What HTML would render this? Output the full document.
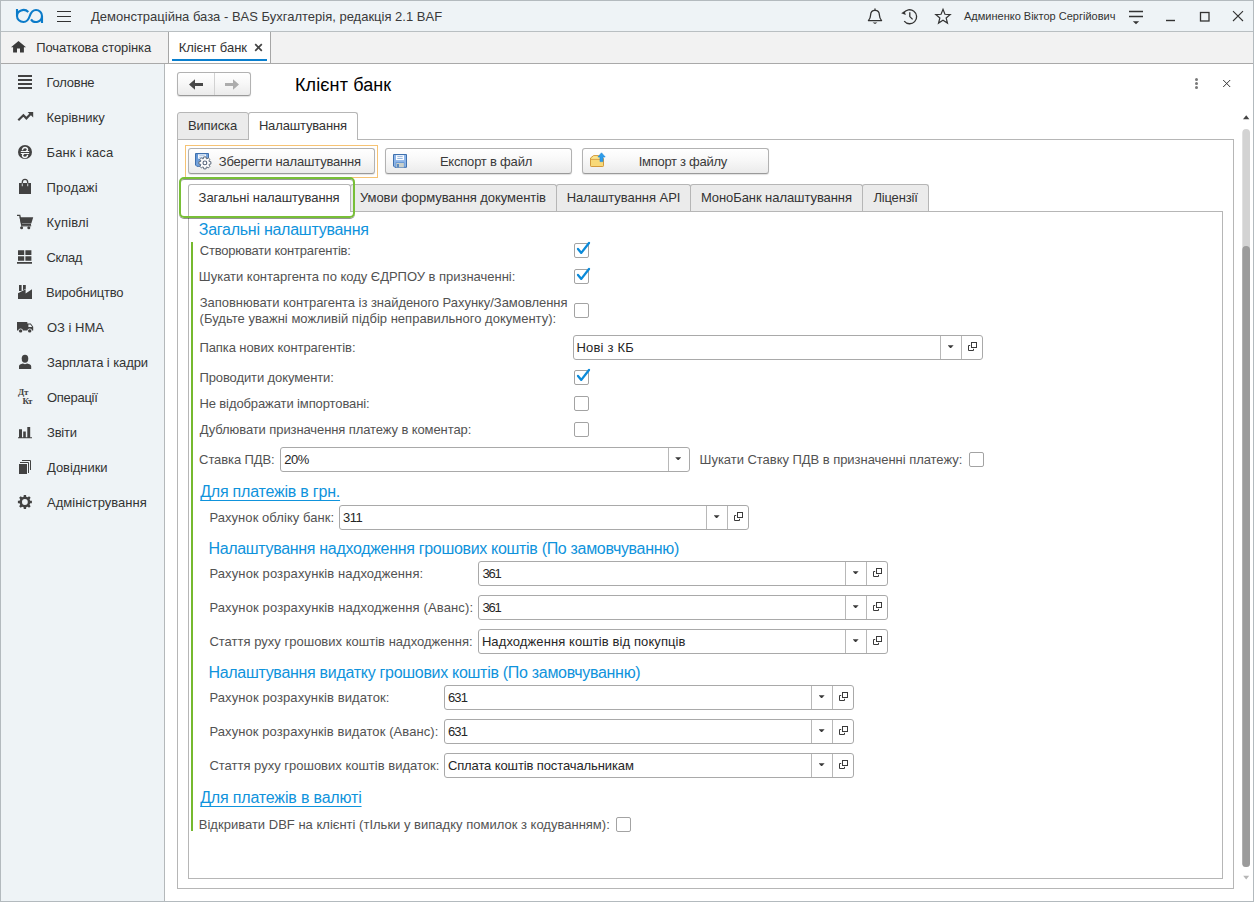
<!DOCTYPE html>
<html lang="uk"><head>
<meta charset="utf-8">
<title>Клієнт банк</title>
<style>
*{box-sizing:border-box;margin:0;padding:0}
html,body{width:1254px;height:902px;overflow:hidden;background:#fff}
body{font-family:"Liberation Sans",sans-serif;font-size:13px;color:#3c3c3c;position:relative}
.abs{position:absolute}
#win{position:absolute;left:0;top:0;width:1254px;height:902px;border:1px solid #b3babe;overflow:hidden}
#topbar{position:absolute;left:1px;top:1px;width:1252px;height:30px;background:#eef3f6}
#topline{position:absolute;left:1px;top:31px;width:1252px;height:1px;background:#b9bfc2}
#tabbar{position:absolute;left:1px;top:32px;width:1252px;height:31px;background:#f2f2f2}
#tabline{position:absolute;left:1px;top:63px;width:1252px;height:1px;background:#a9a9a9}
#sidebar{position:absolute;left:1px;top:64px;width:163px;height:837px;background:#eef3f6}
#sideline{position:absolute;left:164px;top:64px;width:1px;height:837px;background:#b4b8ba}
.t{position:absolute;white-space:nowrap;line-height:16px}
.nav{position:absolute;left:47px;white-space:nowrap;line-height:16px;color:#333}
.lbl{position:absolute;white-space:nowrap;line-height:16px;color:#525252}
.h{position:absolute;white-space:nowrap;line-height:20px;font-size:16px;color:#0f93dc;letter-spacing:-0.3px}
.lnk{text-decoration:underline;text-underline-offset:3px;text-decoration-thickness:1px;text-decoration-skip-ink:none}
.inp{position:absolute;height:25px;border:1px solid #a9a9a9;border-radius:3px;background:#fff}
.inp .v{position:absolute;left:3px;top:4px;line-height:16px;color:#262626;white-space:nowrap}
.inp .dd{position:absolute;top:0;width:1px;height:23px;background:#b8b8b8}
.inp .tri{position:absolute;top:9.300px;width:6px;height:3.200px;background:#3a3a3a;clip-path:polygon(0 0,100% 0,50% 100%)}
.cb{position:absolute;width:15px;height:15px;border:1px solid #a3a3a3;border-radius:2px;background:#fff}
.btn{position:absolute;height:26px;border:1px solid #b2b2b2;border-bottom-color:#9a9a9a;border-radius:3px;background:linear-gradient(#ffffff,#f8f8f8 45%,#ebebeb);box-shadow:0 1px 1px rgba(0,0,0,.12)}
.tab{position:absolute;border:1px solid #b6b6b6;border-bottom:none;background:#ebebeb;border-radius:3px 3px 0 0}
.tab.on{background:#fff}
</style>
</head>
<body>
<div id="win"></div>
<div id="topbar"></div>
<div id="topline"></div>
<div id="tabbar"></div>
<div id="tabline"></div>
<div id="sidebar"></div>
<div id="sideline"></div>

<!-- TOPBAR -->
<div id="top-content">
<svg class="abs" style="left:0;top:0" width="90" height="32" viewBox="0 0 90 32" fill="none">
 <g stroke="#0b7bc9" stroke-width="2.1" fill="none" stroke-linecap="butt">
  <path d="M17 9V16A6.5 6 0 0 0 23.5 22C27 22 28.7 19.2 29.75 16S32.5 10 36 10A6 6 0 0 1 42 16V23"></path>
  <path d="M17 16A6.5 6 0 0 1 28.3 11.95"></path>
  <path d="M42 16A6 6 0 0 1 31 19.3"></path>
 </g>
 <g stroke="#333" stroke-width="1.15">
  <path d="M57 11.5H71M57 16.5H71M57 21.5H71"></path>
 </g>
</svg>
<div class="t" style="left:91px;top:9px;color:#3a3a3a">Демонстраційна база - BAS Бухгалтерія, редакція 2.1 BAF</div>
<svg class="abs" style="left:860px;top:0" width="394" height="32" viewBox="860 0 394 32" fill="none" stroke="#333" stroke-width="1.3">
 <!-- bell -->
 <path d="M868.4 20.600H881.600C880 19 879.500 17.500 879.400 15C879.300 11.600 877.500 10.300 875 10.300C872.500 10.300 870.700 11.600 870.600 15C870.500 17.500 870 19 868.400 20.600Z" stroke-linejoin="round"></path>
 <path d="M875 9.9V8.9" stroke-linecap="round"></path>
 <path d="M872.6 22.4H877.4L875 24Z" fill="#333" stroke="none"></path>
 <!-- history -->
 <path d="M903.6 13.2A7 7 0 1 1 904.2 21.2"></path>
 <path d="M901.2 13.2L905.8 14.9L904.6 11Z" fill="#333" stroke="none"></path>
 <path d="M909.8 12.3V16.6L912.6 19.4"></path>
 <!-- star -->
 <path d="M943.00 9.30L944.94 14.23L950.23 14.55L946.14 17.92L947.47 23.05L943.00 20.20L938.53 23.05L939.86 17.92L935.77 14.55L941.06 14.23Z" stroke-linejoin="miter" stroke-width="1.2"></path>
 <!-- menu -->
 <path d="M1129 11.5H1143M1129 16.5H1143" stroke-width="1.4"></path>
 <path d="M1132.8 21.2H1139.2L1136 24.2Z" fill="#333" stroke="none"></path>
 <!-- min max close -->
 <path d="M1166 20.5H1175" stroke-width="1.4"></path>
 <rect x="1200.5" y="12.5" width="8.5" height="8.5" stroke-width="1.3"></rect>
 <path d="M1233 11.2L1243 21M1243 11.200L1233 21" stroke-width="1.1"></path>
</svg>
<div class="t" style="left:964px;top:8px;font-size:11px;color:#333">Админенко Віктор Сергійович</div>
</div>
<!-- TABBAR -->
<div id="tabs-content">
<svg class="abs" style="left:11px;top:41px" width="15" height="12" viewBox="0 0 15 12"><path d="M7.5 0L0 6.2H2.1V11.5H6V7.6H9V11.5H12.9V6.2H15Z" fill="#3b3b3b"></path></svg>
<div class="t" style="left: 36.3px; top: 40px; color: rgb(51, 51, 51); letter-spacing: -0.105px;">Початкова сторінка</div>
<div class="abs" style="left:168px;top:32px;width:103px;height:31px;background:#fff;border-left:1px solid #a6a6a6;border-right:1px solid #a6a6a6"></div>
<div class="abs" style="left:172px;top:59px;width:95px;height:2px;background:#0a7fce"></div>
<div class="t" style="left: 178.7px; top: 40px; color: rgb(51, 51, 51); letter-spacing: -0.04px;">Клієнт банк</div>
<svg class="abs" style="left:254px;top:43px" width="9" height="9" viewBox="0 0 9 9"><path d="M1.200 1.200L7.800 7.800M7.800 1.200L1.200 7.800" stroke="#444" stroke-width="1.700" fill="none"></path></svg>
</div>
<!-- SIDEBAR -->
<div id="side-content">
<div class="nav" style="top: 75px; left: 46.6px; letter-spacing: -0.233px;">Головне</div>
<div class="nav" style="top: 110px; left: 46.6px; letter-spacing: -0.05px;">Керівнику</div>
<div class="nav" style="top: 145px; left: 46.6px; letter-spacing: 0.09px;">Банк і каса</div>
<div class="nav" style="top: 180px; left: 46.6px; letter-spacing: 0.184px;">Продажі</div>
<div class="nav" style="top: 215px; left: 46.6px; letter-spacing: 0.15px;">Купівлі</div>
<div class="nav" style="top: 250px; left: 46.6px; letter-spacing: -0.475px;">Склад</div>
<div class="nav" style="top: 285px; left: 46px; letter-spacing: -0.21px;">Виробництво</div>
<div class="nav" style="top: 320px; left: 47px; letter-spacing: -0.014px;">ОЗ і НМА</div>
<div class="nav" style="top: 355px; left: 47px; letter-spacing: -0.08px;">Зарплата і кадри</div>
<div class="nav" style="top: 390px; left: 47px; letter-spacing: -0.286px;">Операції</div>
<div class="nav" style="top: 425px; left: 47px; letter-spacing: -0.2px;">Звіти</div>
<div class="nav" style="top: 460px; left: 47px; letter-spacing: -0.05px;">Довідники</div>
<div class="nav" style="top: 495px; left: 47px; letter-spacing: 0.015px;">Адміністрування</div>
<svg class="abs" style="left:0;top:64px" width="50" height="460" viewBox="0 64 50 460" fill="#424242">
 <!-- Головне -->
 <path d="M18 75h14v2h-14zM18 79h14v2h-14zM18 83h14v2h-14zM18 87h14v2h-14z"></path>
 <!-- Керівнику -->
 <path d="M18.3 120.3L23.4 115.2L26.4 118.3L31 113.6" fill="none" stroke="#424242" stroke-width="2.2"></path>
 <path d="M27.6 112H33.2V117.6Z"></path>
 <!-- Банк і каса -->
 <circle cx="25" cy="152" r="7"></circle>
 <g fill="none" stroke="#f4f8fa" stroke-width="1.300">
  <path d="M22.500 150.200C22.200 146.900 27.800 146.600 27.500 149.800C27.400 150.700 26.600 151.200 26 151.500M27.500 154.800C27.800 158.100 22.200 158.400 22.500 155.200C22.600 154.300 23.400 153.800 24 153.500" stroke-width="1.500"></path>
  <path d="M20.800 151.500H29.200M20.800 153.500H29.200" stroke-width="1"></path>
 </g>
 <!-- Продажі -->
 <path d="M19 183H31V194H19Z"></path>
 <path d="M22.3 186V182.2A2.7 2.9 0 0 1 27.7 182.2V186" fill="none" stroke="#424242" stroke-width="1.3"></path>
 <path d="M22.3 186.3V183.400M27.7 186.3V183.4" fill="none" stroke="#c9ced1" stroke-width="1.1"></path>
 <!-- Купівлі -->
 <path d="M17 215.400H19.800L21.6 224.5H31" fill="none" stroke="#424242" stroke-width="1.3"></path>
 <path d="M19.600 217.300H33.200L31.300 223.600H21Z"></path>
 <path d="M21 225.200H31.200V226.400H21Z"></path>
 <circle cx="21.600" cy="227.800" r="1.500"></circle><circle cx="28.800" cy="227.800" r="1.500"></circle>
 <!-- Склад -->
 <path d="M18 250.200H24.200V255H18ZM25.400 250.200H31.400V255H25.400ZM18 256.200H24.200V260.800H18ZM25.400 256.200H31.400V260.800H25.400ZM17 262H32V263.700H17Z"></path>
 <!-- Виробництво -->
 <path d="M18 299V293.300L25.600 289.300V293.600L32 289.300V299Z"></path>
 <path d="M19 285H21.600V291H19ZM23 285H25.800V288.800L23 290.200Z"></path>
 <!-- ОЗ і НМА -->
 <path d="M17 322H27.300V323.600H30.800L33.200 326.700V330.400H17Z"></path>
 <path d="M28.400 324.600H30.400L32.200 327.100H28.400Z" fill="#eef3f6"></path>
 <circle cx="20.600" cy="330.800" r="2.300" fill="#eef3f6"></circle><circle cx="29.700" cy="330.800" r="2.300" fill="#eef3f6"></circle>
 <circle cx="20.600" cy="330.900" r="1.700"></circle><circle cx="29.700" cy="330.900" r="1.700"></circle>
 <!-- Зарплата і кадри -->
 <ellipse cx="25" cy="358.800" rx="3.300" ry="4"></ellipse>
 <path d="M19 369V366.200C19 364.600 20.600 364 22.800 363.400L25 364.200L27.200 363.400C29.400 364 31.200 364.600 31.200 366.200V369Z"></path>
 <!-- Звіти -->
 <path d="M19 429.200H22V437.200H19ZM23.200 431.400H25.800V437.200H23.200ZM27.300 427H30.200V437.200H27.300ZM18 437.200H32V438.200H18Z"></path>
 <!-- Довідники -->
 <path d="M19 464H27V474H19Z"></path>
 <path d="M20 462.500H28.500V473M22 460.500H30.500V470" fill="none" stroke="#424242" stroke-width="1"></path>
 <!-- Адміністрування -->
 <path d="M23.62 496.65L23.73 495.00L26.07 495.00L26.18 496.65L27.77 497.31L29.03 496.22L30.68 497.87L29.59 499.13L30.25 500.72L31.90 500.83L31.90 503.17L30.25 503.28L29.59 504.87L30.68 506.13L29.03 507.78L27.77 506.69L26.18 507.35L26.07 509.00L23.73 509.00L23.62 507.35L22.03 506.69L20.77 507.78L19.12 506.13L20.21 504.87L19.55 503.28L17.90 503.17L17.90 500.83L19.55 500.72L20.21 499.13L19.12 497.87L20.77 496.22L22.03 497.31ZM24.900 499.100A2.900 2.900 0 1 0 24.900 504.900A2.900 2.900 0 1 0 24.900 499.100Z" fill-rule="evenodd"></path>
</svg>
<div class="abs" style="left:18px;top:388px;font-family:'Liberation Serif',serif;font-weight:bold;font-size:9px;line-height:9px;color:#424242;letter-spacing:-0.3px">Дт</div>
<div class="abs" style="left:22.500px;top:397px;font-family:'Liberation Serif',serif;font-weight:bold;font-size:9px;line-height:9px;color:#424242;letter-spacing:-0.700px">Кт</div>

</div>
<!-- MAIN -->
<div id="main-content">
<div class="btn" style="left:177px;top:72px;width:74px;height:24px"></div>
<div class="abs" style="left:214px;top:73px;width:1px;height:22px;background:#d2d2d2"></div>
<svg class="abs" style="left:186px;top:76px" width="58" height="16" viewBox="0 0 58 16"><path d="M3 8.500L9 3.200V7H17V10H9V13.800Z" fill="#484848"></path><path d="M53 8.500L47 3.200V7H39V10H47V13.800Z" fill="#adadad"></path></svg>
<div class="big t" style="left: 295px; top: 74px; font-size: 18px; line-height: 22px; color: rgb(0, 0, 0); letter-spacing: 0.11px;">Клієнт банк</div>
<svg class="abs" style="left:1190px;top:74px" width="46" height="20" viewBox="1190 74 46 20"><g fill="#787878"><circle cx="1196.500" cy="79.500" r="1.500"></circle><circle cx="1196.500" cy="83.500" r="1.500"></circle><circle cx="1196.500" cy="87.500" r="1.500"></circle></g><path d="M1223.200 80L1230.200 87M1230.200 80L1223.200 87" stroke="#333" stroke-width="1" fill="none"></path></svg>
<div class="abs" style="left:177px;top:139px;width:1057px;height:750px;border:1px solid #b6b6b6"></div>
<div class="tab" style="left:177px;top:112px;width:72px;height:28px;border-bottom:1px solid #b6b6b6"></div>
<div class="tab on" style="left:248px;top:112px;width:110px;height:28px"></div>
<div class="t" style="left: 187.9px; top: 118px; color: rgb(51, 51, 51); letter-spacing: -0.116px;">Виписка</div>
<div class="t" style="left: 258.9px; top: 118px; color: rgb(51, 51, 51); letter-spacing: -0.155px;">Налаштування</div>
<svg class="abs" style="left:1240px;top:112px" width="12" height="780" viewBox="1240 112 12 780"><path d="M1243 119.200H1249.400L1246.200 115.200Z" fill="#444"></path><rect x="1242.300" y="129" width="7.700" height="738" rx="3.850" fill="#d3d3d3"></rect><rect x="1242.300" y="246" width="7.700" height="621" rx="3.850" fill="#9b9b9b"></rect><path d="M1243.200 875.800H1249.200L1246.200 879.600Z" fill="#b6b6b6"></path></svg>
<div class="abs" style="left:185px;top:145px;width:193px;height:33px;border:1px solid #f6c374"></div>
<div class="btn" style="left:188px;top:148px;width:187px"></div>
<div class="btn" style="left:385px;top:148px;width:187px"></div>
<div class="btn" style="left:582px;top:148px;width:187px"></div>
<div class="t" style="left: 218.8px; top: 154px; color: rgb(58, 58, 58); letter-spacing: -0.185px;">Зберегти налаштування</div>
<div class="t" style="left: 439.9px; top: 154px; color: rgb(58, 58, 58); letter-spacing: -0.207px;">Експорт в файл</div>
<div class="t" style="left: 638.7px; top: 154px; color: rgb(58, 58, 58); letter-spacing: -0.276px;">Імпорт з файлу</div>
<svg class="abs" style="left:190px;top:150px" width="420" height="22" viewBox="190 150 420 22">
 <defs><linearGradient id="dg" x1="0" y1="0" x2="1" y2="1"><stop offset="0" stop-color="#5a8fd0"></stop><stop offset="1" stop-color="#8fb8ea"></stop></linearGradient></defs>
 <!-- save settings: diskette + gear -->
 <path d="M195.500 153.500H208.500V166.300H196.800L195.500 165Z" fill="url(#dg)" stroke="#3f70ad" stroke-width="1"></path>
 <rect x="198" y="154.300" width="8" height="4.400" fill="#f4f8fd"></rect>
 <path d="M199.300 155.700H204.700M199.300 157.500H204.700" stroke="#9db9dc" stroke-width=".8"></path>
 <path d="M203.51 158.62L203.71 156.92L206.09 156.92L206.29 158.62L206.94 158.89L208.29 157.83L209.97 159.51L208.91 160.86L209.18 161.51L210.88 161.71L210.88 164.09L209.18 164.29L208.91 164.94L209.97 166.29L208.29 167.97L206.94 166.91L206.29 167.18L206.09 168.88L203.71 168.88L203.51 167.18L202.86 166.91L201.51 167.97L199.83 166.29L200.89 164.94L200.62 164.29L198.92 164.09L198.92 161.71L200.62 161.51L200.89 160.86L199.83 159.51L201.51 157.83L202.86 158.89Z" fill="#fdfdfd" stroke="#5f6c7d" stroke-width="1" stroke-linejoin="round"></path>
 <circle cx="204.900" cy="162.900" r="1.900" fill="#fff" stroke="#55647a" stroke-width="1.100"></circle>
 <!-- export: diskette -->
 <path d="M393.500 154.500H406.500V167.300H394.800L393.500 166Z" fill="#8db5e8" stroke="#3f70ad" stroke-width="1"></path>
 <rect x="396" y="155.200" width="8" height="4.900" fill="#fbfdff"></rect>
 <path d="M397.300 156.600H402.700M397.300 158.500H402.700" stroke="#8eafd8" stroke-width=".9"></path>
 <rect x="395.600" y="162.300" width="8.800" height="5" fill="#5d8fce"></rect>
 <rect x="396.300" y="163" width="7.600" height="4.300" fill="#c9d0cb"></rect>
 <rect x="397.200" y="164" width="1.600" height="3.300" fill="#4279bd"></rect>
 <!-- import: folder + arrow -->
 <path d="M590.500 158V165.800Q590.500 166.500 591.200 166.500H602.800Q603.500 166.500 603.500 165.800V158.500L598.300 155.600H593.600Z" fill="#f8d978" stroke="#d39a3c" stroke-width="1" stroke-linejoin="round"></path>
 <path d="M590.800 159.400H603.200" stroke="#d9a54a" stroke-width="1"></path>
 <path d="M591.300 158.600L593.800 156.300H598L600.500 158.600Z" fill="#fbe48f"></path>
 <path d="M601.500 152.800L605.200 157H603V161.600H600V157H597.900Z" fill="#2e9ce9" stroke="#2389d6" stroke-width=".6" stroke-linejoin="round"></path>
</svg>
<div class="abs" style="left:188px;top:211px;width:1035px;height:668px;border:1px solid #b6b6b6"></div>
<div class="tab on" style="left:188px;top:184px;width:163px;height:28px"></div>
<div class="tab" style="left:350px;top:184px;width:207px;height:27px"></div>
<div class="tab" style="left:556px;top:184px;width:135px;height:27px"></div>
<div class="tab" style="left:690px;top:184px;width:173px;height:27px"></div>
<div class="tab" style="left:862px;top:184px;width:67px;height:27px"></div>
<div class="t" style="left: 198.6px; top: 190px; color: rgb(51, 51, 51); letter-spacing: -0.07px;">Загальні налаштування</div>
<div class="t" style="left: 359.9px; top: 190px; color: rgb(51, 51, 51); letter-spacing: -0.054px;">Умови формування документів</div>
<div class="t" style="left: 566.7px; top: 190px; color: rgb(51, 51, 51); letter-spacing: -0.046px;">Налаштування API</div>
<div class="t" style="left: 700.9px; top: 190px; color: rgb(51, 51, 51); letter-spacing: -0.07px;">МоноБанк налаштування</div>
<div class="t" style="left: 873.4px; top: 190px; color: rgb(51, 51, 51); letter-spacing: -0.171px;">Ліцензії</div>
<div class="abs" style="left:179px;top:177px;width:176px;height:41px;border:2px solid #78bf37;border-radius:5px;box-shadow:0 1px 0 rgba(0,0,0,.42),inset 0 1px 0 rgba(0,0,0,.42)"></div>
<div class="abs" style="left:191px;top:242px;width:2px;height:589px;background:#76b92f"></div>
<div class="h" style="left: 198.8px; top: 220px; letter-spacing: -0.26px;">Загальні налаштування</div>
<div class="lbl" style="left: 199.8px; top: 243px; letter-spacing: -0.2px;">Створювати контрагентів:</div>
<div class="cb" style="left:574px;top:243px"></div><svg class="abs" style="left:574px;top:240px" width="18" height="18" viewBox="0 0 18 18" fill="none"><path d="M4 9L7.300 12.900L15 3" stroke="#0b8ad9" stroke-width="2.300" stroke-linecap="round" stroke-linejoin="round"></path></svg>
<div class="lbl" style="left: 198.8px; top: 269px; letter-spacing: -0.019px;">Шукати контаргента по коду ЄДРПОУ в призначенні:</div>
<div class="cb" style="left:574px;top:269px"></div><svg class="abs" style="left:574px;top:266px" width="18" height="18" viewBox="0 0 18 18" fill="none"><path d="M4 9L7.300 12.900L15 3" stroke="#0b8ad9" stroke-width="2.300" stroke-linecap="round" stroke-linejoin="round"></path></svg>
<div class="lbl" style="left: 199.8px; top: 295px; letter-spacing: -0.045px;">Заповнювати контрагента із знайденого Рахунку/Замовлення</div>
<div class="lbl" style="left: 199.6px; top: 311px; letter-spacing: 0.021px;">(Будьте уважні можливій підбір неправильного документу):</div>
<div class="cb" style="left:574px;top:303px"></div>
<div class="lbl" style="left: 199.4px; top: 340px; letter-spacing: -0.079px;">Папка нових контрагентів:</div>
<div class="inp" style="left:573px;top:335px;width:410px"><span class="v" style="left: 2.5px; letter-spacing: 0.2px;">Нові з КБ</span><i class="dd" style="left:366px"></i><i class="tri" style="left:373.600px"></i><i class="dd" style="left:387px"></i><svg class="abs" style="left:393px;top:6px" width="11" height="11" viewBox="0 0 11 11" fill="none" stroke="#3a3a3a" stroke-width="1"><rect x="4.500" y="0.500" width="5" height="5"></rect><path d="M3.200 3.500H1.500V8.500H6.500V6.800"></path></svg></div>
<div class="lbl" style="left: 199.4px; top: 370px; letter-spacing: -0.1px;">Проводити документи:</div>
<div class="cb" style="left:574px;top:370px"></div><svg class="abs" style="left:574px;top:367px" width="18" height="18" viewBox="0 0 18 18" fill="none"><path d="M4 9L7.300 12.900L15 3" stroke="#0b8ad9" stroke-width="2.300" stroke-linecap="round" stroke-linejoin="round"></path></svg>
<div class="lbl" style="left: 199.4px; top: 396px; letter-spacing: -0.104px;">Не відображати імпортовані:</div>
<div class="cb" style="left:574px;top:396px"></div>
<div class="lbl" style="left: 199.8px; top: 422px; letter-spacing: -0.096px;">Дублювати призначення платежу в коментар:</div>
<div class="cb" style="left:574px;top:422px"></div>
<div class="lbl" style="left: 199.1px; top: 452px; letter-spacing: -0.1px;">Ставка ПДВ:</div>
<div class="inp" style="left:280px;top:447px;width:410px"><span class="v" style="left: 3.3px; letter-spacing: -0.5px;">20%</span><i class="dd" style="left:387px"></i><i class="tri" style="left:394.200px"></i></div>
<div class="lbl" style="left: 699.6px; top: 452px; letter-spacing: -0.041px;">Шукати Ставку ПДВ в призначенні платежу:</div>
<div class="cb" style="left:969px;top:452px"></div>
<div class="h lnk" style="left: 200.2px; top: 482px; letter-spacing: -0.211px;">Для платежів в грн.</div>
<div class="lbl" style="left: 209.4px; top: 510px; letter-spacing: 0.063px;">Рахунок обліку банк:</div>
<div class="inp" style="left:339px;top:505px;width:410px"><span class="v" style="left: 2.9px; letter-spacing: -0.45px;">311</span><i class="dd" style="left:366px"></i><i class="tri" style="left:373.600px"></i><i class="dd" style="left:387px"></i><svg class="abs" style="left:393px;top:6px" width="11" height="11" viewBox="0 0 11 11" fill="none" stroke="#3a3a3a" stroke-width="1"><rect x="4.500" y="0.500" width="5" height="5"></rect><path d="M3.200 3.500H1.500V8.500H6.500V6.800"></path></svg></div>
<div class="h" style="left: 208.4px; top: 539px; letter-spacing: -0.315px;">Налаштування надходження грошових коштів (По замовчуванню)</div>
<div class="lbl" style="left: 209.4px; top: 566px; letter-spacing: 0.122px;">Рахунок розрахунків надходження:</div>
<div class="inp" style="left:478px;top:561px;width:410px"><span class="v" style="left: 3.5px; letter-spacing: -1.25px;">361</span><i class="dd" style="left:366px"></i><i class="tri" style="left:373.600px"></i><i class="dd" style="left:387px"></i><svg class="abs" style="left:393px;top:6px" width="11" height="11" viewBox="0 0 11 11" fill="none" stroke="#3a3a3a" stroke-width="1"><rect x="4.500" y="0.500" width="5" height="5"></rect><path d="M3.200 3.500H1.500V8.500H6.500V6.800"></path></svg></div>
<div class="lbl" style="left: 209.4px; top: 600px; letter-spacing: 0.128px;">Рахунок розрахунків надходження (Аванс):</div>
<div class="inp" style="left:478px;top:595px;width:410px"><span class="v" style="left: 3.5px; letter-spacing: -1.25px;">361</span><i class="dd" style="left:366px"></i><i class="tri" style="left:373.600px"></i><i class="dd" style="left:387px"></i><svg class="abs" style="left:393px;top:6px" width="11" height="11" viewBox="0 0 11 11" fill="none" stroke="#3a3a3a" stroke-width="1"><rect x="4.500" y="0.500" width="5" height="5"></rect><path d="M3.200 3.500H1.500V8.500H6.500V6.800"></path></svg></div>
<div class="lbl" style="left: 209.4px; top: 634px; letter-spacing: 0.013px;">Стаття руху грошових коштів надходження:</div>
<div class="inp" style="left:478px;top:629px;width:410px"><span class="v" style="left: 2.9px; letter-spacing: 0.094px;">Надходження коштів від покупців</span><i class="dd" style="left:366px"></i><i class="tri" style="left:373.600px"></i><i class="dd" style="left:387px"></i><svg class="abs" style="left:393px;top:6px" width="11" height="11" viewBox="0 0 11 11" fill="none" stroke="#3a3a3a" stroke-width="1"><rect x="4.500" y="0.500" width="5" height="5"></rect><path d="M3.200 3.500H1.500V8.500H6.500V6.800"></path></svg></div>
<div class="h" style="left: 208.4px; top: 663px; letter-spacing: -0.295px;">Налаштування видатку грошових коштів (По замовчуванню)</div>
<div class="lbl" style="left: 209.4px; top: 690px; letter-spacing: 0.103px;">Рахунок розрахунків видаток:</div>
<div class="inp" style="left:444px;top:685px;width:410px"><span class="v" style="left: 2.9px; letter-spacing: -0.8px;">631</span><i class="dd" style="left:366px"></i><i class="tri" style="left:373.600px"></i><i class="dd" style="left:387px"></i><svg class="abs" style="left:393px;top:6px" width="11" height="11" viewBox="0 0 11 11" fill="none" stroke="#3a3a3a" stroke-width="1"><rect x="4.500" y="0.500" width="5" height="5"></rect><path d="M3.200 3.500H1.500V8.500H6.500V6.800"></path></svg></div>
<div class="lbl" style="left: 209.4px; top: 724px; letter-spacing: 0.091px;">Рахунок розрахунків видаток (Аванс):</div>
<div class="inp" style="left:444px;top:719px;width:410px"><span class="v" style="left: 2.9px; letter-spacing: -0.8px;">631</span><i class="dd" style="left:366px"></i><i class="tri" style="left:373.600px"></i><i class="dd" style="left:387px"></i><svg class="abs" style="left:393px;top:6px" width="11" height="11" viewBox="0 0 11 11" fill="none" stroke="#3a3a3a" stroke-width="1"><rect x="4.500" y="0.500" width="5" height="5"></rect><path d="M3.200 3.500H1.500V8.500H6.500V6.800"></path></svg></div>
<div class="lbl" style="left: 209.4px; top: 758px; letter-spacing: -0.002px;">Стаття руху грошових коштів видаток:</div>
<div class="inp" style="left:444px;top:753px;width:410px"><span class="v" style="left: 2.9px; letter-spacing: -0.111px;">Сплата коштів постачальникам</span><i class="dd" style="left:366px"></i><i class="tri" style="left:373.600px"></i><i class="dd" style="left:387px"></i><svg class="abs" style="left:393px;top:6px" width="11" height="11" viewBox="0 0 11 11" fill="none" stroke="#3a3a3a" stroke-width="1"><rect x="4.500" y="0.500" width="5" height="5"></rect><path d="M3.200 3.500H1.500V8.500H6.500V6.800"></path></svg></div>
<div class="h lnk" style="left: 200.2px; top: 788px; letter-spacing: -0.17px;">Для платежів в валюті</div>
<div class="lbl" style="left: 198.8px; top: 817px; letter-spacing: 0.009px;">Відкривати DBF на клієнті (тІльки у випадку помилок з кодуванням):</div>
<div class="cb" style="left:616px;top:817px"></div>
</div>


</body></html>
